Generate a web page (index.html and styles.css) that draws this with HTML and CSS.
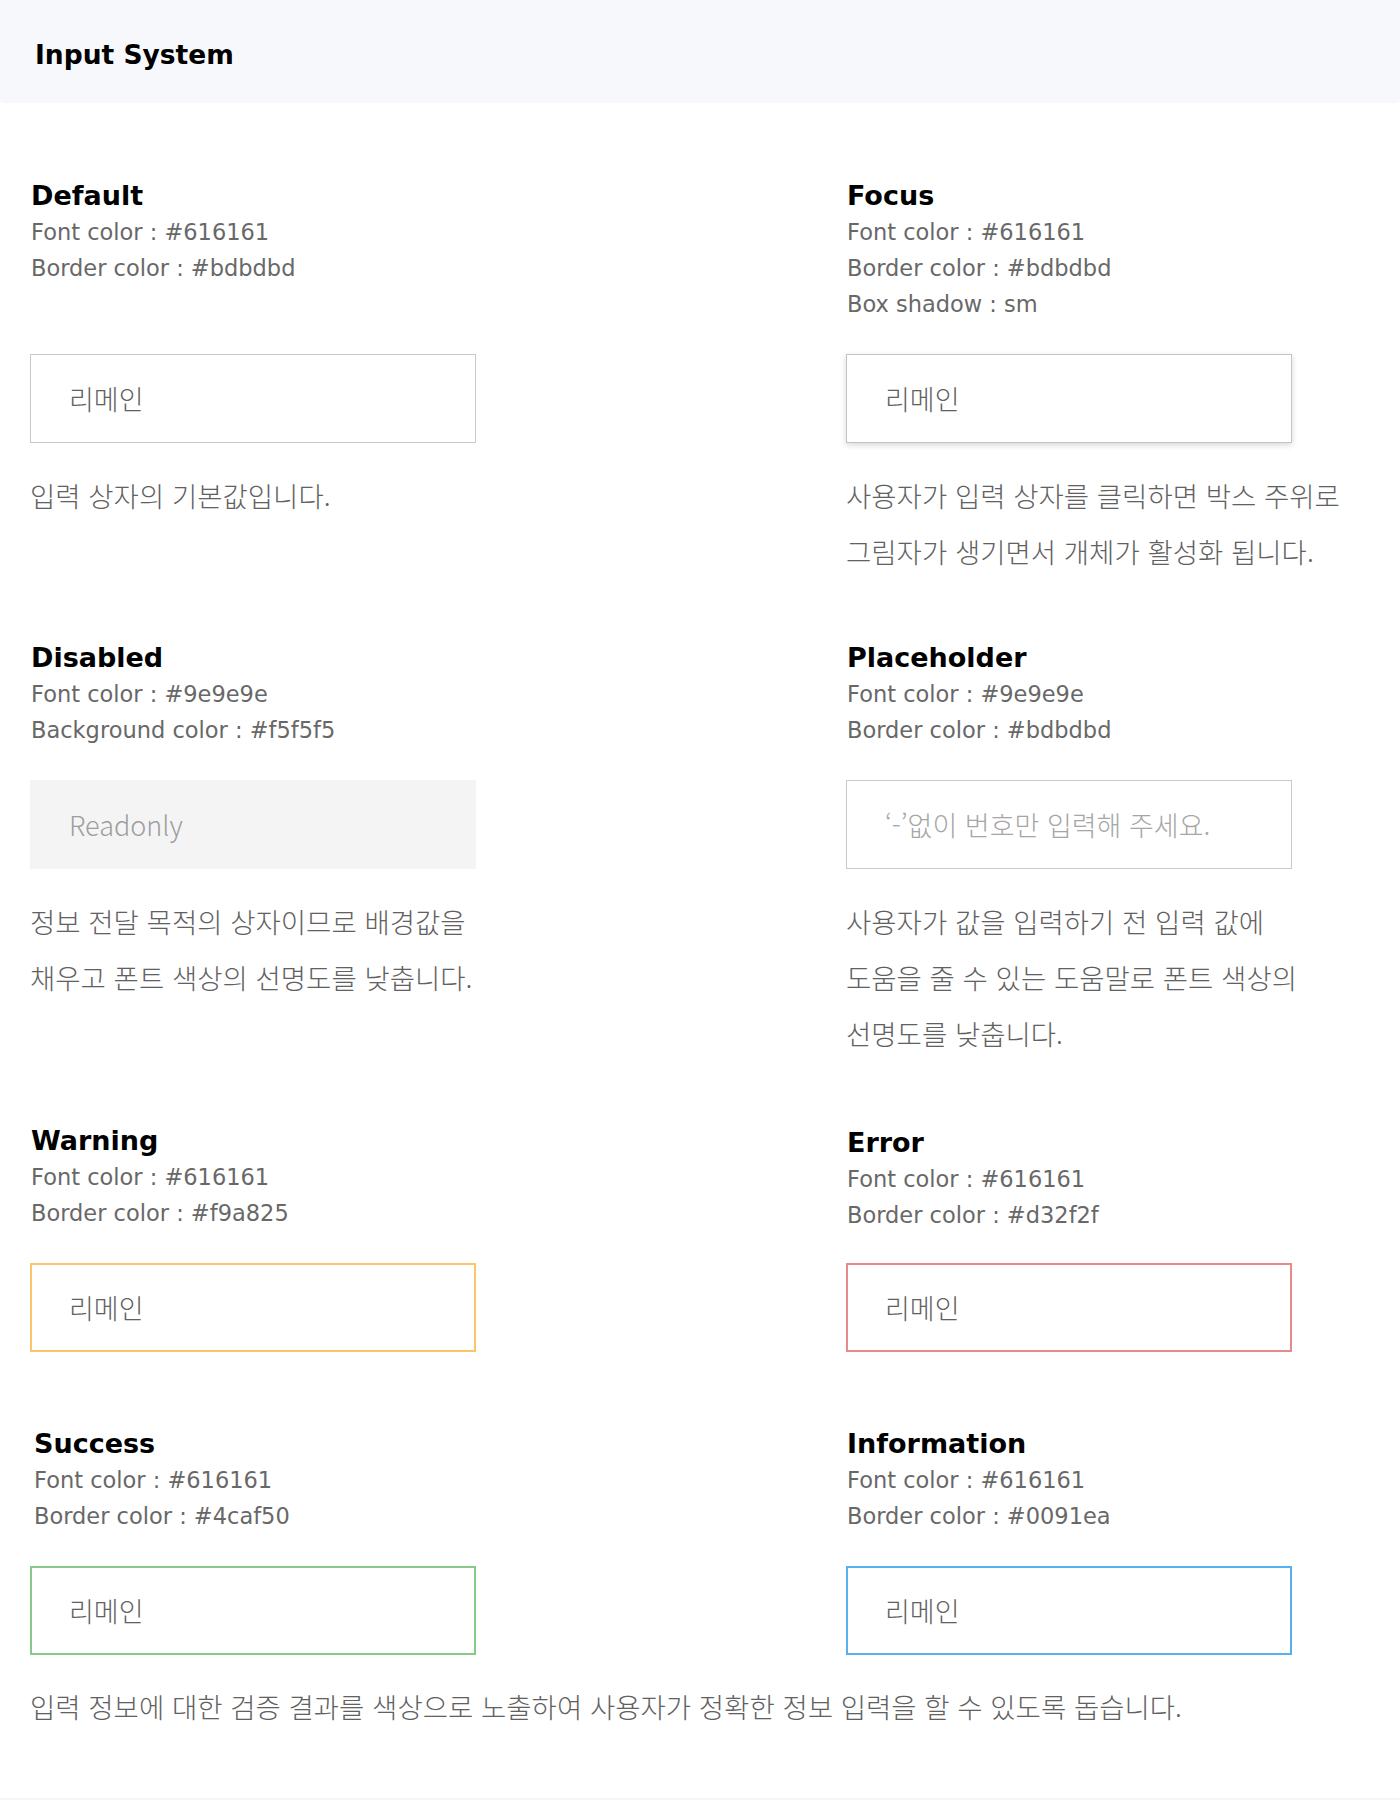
FILE: index.html
```html
<!DOCTYPE html>
<html lang="ko">
<head>
<meta charset="utf-8">
<title>Input System</title>
<link rel="stylesheet" href="styles.css">
</head>
<body>
<header class="page-header">
  <h1 class="page-title">Input System</h1>
</header>

<main class="content">
  <section class="row">
    <div class="spec">
      <h2 class="spec-title">Default</h2>
      <p class="spec-line">Font color : #616161</p>
      <p class="spec-line">Border color : #bdbdbd</p>
    </div>
    <div class="spec">
      <h2 class="spec-title">Focus</h2>
      <p class="spec-line">Font color : #616161</p>
      <p class="spec-line">Border color : #bdbdbd</p>
      <p class="spec-line">Box shadow : sm</p>
    </div>
    <input class="field" type="text" value="리메인" readonly>
    <input class="field field--focus" type="text" value="리메인" readonly>
    <p class="desc">입력 상자의 기본값입니다.</p>
    <p class="desc">사용자가 입력 상자를 클릭하면 박스 주위로<br>그림자가 생기면서 개체가 활성화 됩니다.</p>
  </section>

  <section class="row row--second">
    <div class="spec">
      <h2 class="spec-title">Disabled</h2>
      <p class="spec-line">Font color : #9e9e9e</p>
      <p class="spec-line">Background color : #f5f5f5</p>
    </div>
    <div class="spec">
      <h2 class="spec-title">Placeholder</h2>
      <p class="spec-line">Font color : #9e9e9e</p>
      <p class="spec-line">Border color : #bdbdbd</p>
    </div>
    <input class="field field--disabled" type="text" value="Readonly" disabled>
    <input class="field" type="text" placeholder="‘-’없이 번호만 입력해 주세요." readonly>
    <p class="desc">정보 전달 목적의 상자이므로 배경값을<br>채우고 폰트 색상의 선명도를 낮춥니다.</p>
    <p class="desc">사용자가 값을 입력하기 전 입력 값에<br>도움을 줄 수 있는 도움말로 폰트 색상의<br>선명도를 낮춥니다.</p>
  </section>

  <section class="row row--third">
    <div class="spec">
      <h2 class="spec-title">Warning</h2>
      <p class="spec-line">Font color : #616161</p>
      <p class="spec-line">Border color : #f9a825</p>
    </div>
    <div class="spec spec--low">
      <h2 class="spec-title">Error</h2>
      <p class="spec-line">Font color : #616161</p>
      <p class="spec-line">Border color : #d32f2f</p>
    </div>
    <input class="field field--warning" type="text" value="리메인" readonly>
    <input class="field field--error" type="text" value="리메인" readonly>
  </section>

  <section class="row row--fourth">
    <div class="spec spec--inset">
      <h2 class="spec-title">Success</h2>
      <p class="spec-line">Font color : #616161</p>
      <p class="spec-line">Border color : #4caf50</p>
    </div>
    <div class="spec">
      <h2 class="spec-title">Information</h2>
      <p class="spec-line">Font color : #616161</p>
      <p class="spec-line">Border color : #0091ea</p>
    </div>
    <input class="field field--success" type="text" value="리메인" readonly>
    <input class="field field--info" type="text" value="리메인" readonly>
    <p class="desc desc--wide">입력 정보에 대한 검증 결과를 색상으로 노출하여 사용자가 정확한 정보 입력을 할 수 있도록 돕습니다.</p>
  </section>
</main>

<div class="next-section"></div>
</body>
</html>
```

FILE: styles.css
```css
* {
  box-sizing: border-box;
}

body {
  margin: 0;
  background: #ffffff;
  font-family: "DejaVu Sans", "Noto Sans CJK KR", sans-serif;
  color: #616161;
}

.page-header {
  height: 103px;
  background: #f7f8fb;
  border-radius: 0 0 4px 4px;
  display: flex;
  align-items: center;
  padding: 6px 0 0 35px;
}

.page-title {
  margin: 0;
  font-family: "DejaVu Sans", sans-serif;
  font-weight: 700;
  font-size: 26.5px;
  line-height: 30px;
  color: #000000;
}

.content {
  padding: 75px 0 64px 30px;
}

.row {
  display: grid;
  grid-template-columns: 816px 1fr;
  align-items: start;
}

.row--second {
  margin-top: 61px;
}

.row--third {
  margin-top: 62px;
}

.row--fourth {
  margin-top: 74px;
}

.spec {
  margin-bottom: 32px;
  padding-left: 1px;
}

.spec--low {
  padding-top: 2px;
  margin-bottom: 30px;
}

.spec--inset {
  padding-left: 4px;
}

.spec-title {
  margin: 0;
  font-family: "DejaVu Sans", sans-serif;
  font-weight: 700;
  font-size: 27px;
  line-height: 36px;
  color: #000000;
}

.spec-line {
  margin: 0;
  font-family: "DejaVu Sans", sans-serif;
  font-size: 22.5px;
  line-height: 36px;
  color: #686868;
}

.field {
  display: block;
  width: 446px;
  height: 89px;
  margin: 0;
  padding: 0 0 0 38px;
  border: 1px solid #c9c9c9;
  border-radius: 0;
  background: #ffffff;
  font-family: "Noto Sans CJK KR", sans-serif;
  font-size: 27px;
  font-weight: 300;
  color: #616161;
  -webkit-text-fill-color: #616161;
  outline: none;
}

.field::placeholder {
  color: #a6a6a6;
  -webkit-text-fill-color: #a6a6a6;
  opacity: 1;
}

.field--focus {
  border-color: #c4c4c4;
  box-shadow: 0 2px 6px rgba(0, 0, 0, 0.16);
}

.field--disabled {
  border-color: #f4f4f4;
  background: #f4f4f4;
  color: #9e9e9e;
  -webkit-text-fill-color: #9e9e9e;
}

.field--warning {
  border: 2px solid #fac66a;
  padding-left: 37px;
}

.field--error {
  border: 2px solid #e78a8a;
  padding-left: 37px;
}

.field--success {
  border: 2px solid #85ca88;
  padding-left: 37px;
}

.field--info {
  border: 2px solid #58b0ee;
  padding-left: 37px;
}

.desc {
  margin: 24px 0 0;
  font-family: "Noto Sans CJK KR", sans-serif;
  font-size: 27.5px;
  font-weight: 300;
  line-height: 56px;
  color: #616161;
}

.desc--wide {
  grid-column: 1 / -1;
  margin-top: 23px;
}

.next-section {
  height: 40px;
  background: #f4f5f7;
}
```
